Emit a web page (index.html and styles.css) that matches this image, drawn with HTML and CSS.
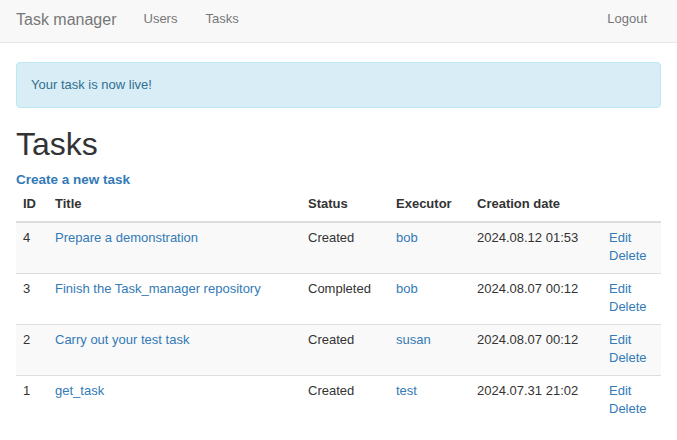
FILE: index.html
```
<!DOCTYPE html>
<html lang="en">
<head>
<meta charset="utf-8">
<title>Task manager</title>
<link rel="stylesheet" href="styles.css">
</head>
<body>
<nav class="navbar">
  <a class="brand" href="#">Task manager</a>
  <ul class="nav">
    <li><a href="#">Users</a></li>
    <li><a href="#">Tasks</a></li>
  </ul>
  <ul class="nav nav-right">
    <li><a href="#">Logout</a></li>
  </ul>
</nav>
<main class="container">
  <div class="alert">Your task is now live!</div>
  <h1 class="title">Tasks</h1>
  <a class="create" href="#">Create a new task</a>
  <table class="table">
    <colgroup>
      <col class="c-id"><col class="c-title"><col class="c-status"><col class="c-exec"><col class="c-date"><col class="c-act">
    </colgroup>
    <thead>
      <tr><th>ID</th><th>Title</th><th>Status</th><th>Executor</th><th>Creation date</th><th></th></tr>
    </thead>
    <tbody>
      <tr><td>4</td><td><a href="#">Prepare a demonstration</a></td><td>Created</td><td><a href="#">bob</a></td><td>2024.08.12 01:53</td><td><a href="#">Edit</a><br><a href="#">Delete</a></td></tr>
      <tr><td>3</td><td><a href="#">Finish the Task_manager repository</a></td><td>Completed</td><td><a href="#">bob</a></td><td>2024.08.07 00:12</td><td><a href="#">Edit</a><br><a href="#">Delete</a></td></tr>
      <tr><td>2</td><td><a href="#">Carry out your test task</a></td><td>Created</td><td><a href="#">susan</a></td><td>2024.08.07 00:12</td><td><a href="#">Edit</a><br><a href="#">Delete</a></td></tr>
      <tr><td>1</td><td><a href="#">get_task</a></td><td>Created</td><td><a href="#">test</a></td><td>2024.07.31 21:02</td><td><a href="#">Edit</a><br><a href="#">Delete</a></td></tr>
    </tbody>
  </table>
</main>
</body>
</html>
```

FILE: styles.css
```
* { box-sizing: border-box; }
html, body { margin: 0; padding: 0; }
body {
  font-family: "Liberation Sans", Arial, Helvetica, sans-serif;
  font-size: 13px;
  line-height: 18px;
  color: #333;
  background: #fff;
}
a { color: #337ab7; text-decoration: none; }

.navbar {
  display: flex;
  align-items: flex-start;
  height: 43px;
  padding: 10px 16px 0;
  background: #f8f8f8;
  border-bottom: 1px solid #e7e7e7;
}
.brand {
  font-size: 16px;
  line-height: 20px;
  color: #777;
  padding-right: 13px;
}
.nav {
  display: flex;
  list-style: none;
  margin: 0;
  padding: 0;
}
.nav a {
  display: block;
  padding: 0 14px;
  color: #777;
  font-size: 13px;
  line-height: 18px;
}
.nav-right { margin-left: auto; }

.container { padding: 0 16px; }

.alert {
  margin-top: 19px;
  padding: 13px 14px;
  background: #d9edf7;
  border: 1px solid #bce8f1;
  border-radius: 4px;
  color: #31708f;
}

.title {
  margin: 18px 0 9px;
  font-size: 32px;
  line-height: 36px;
  font-weight: normal;
  color: #333;
}

.create {
  display: block;
  font-size: 13.5px;
  font-weight: bold;
}

.table {
  width: 100%;
  border-collapse: collapse;
  border-spacing: 0;
  table-layout: fixed;
}
.c-id { width: 32px; }
.c-title { width: 253px; }
.c-status { width: 88px; }
.c-exec { width: 81px; }
.c-date { width: 132px; }
.c-act { width: 59px; }

.table th, .table td {
  text-align: left;
  vertical-align: top;
  padding: 6px 7px 8px;
  white-space: nowrap;
}
.table th {
  font-weight: bold;
  border-bottom: 2px solid #ddd;
}
.table td { border-top: 1px solid #ddd; }
.table tbody tr:nth-child(odd) { background: #f9f9f9; }
```
